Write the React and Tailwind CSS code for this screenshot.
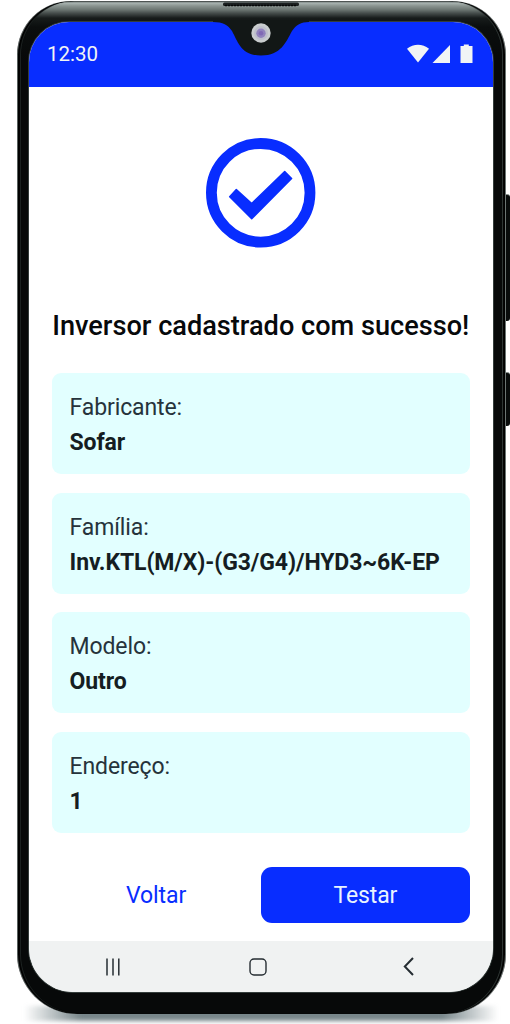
import React from 'react';

const fields = [
    { label: 'Fabricante:', value: 'Sofar' },
    { label: 'Família:', value: 'Inv.KTL(M/X)-(G3/G4)/HYD3~6K-EP' },
    { label: 'Modelo:', value: 'Outro' },
    { label: 'Endereço:', value: '1' },
];

const StatusBar = () => (
    <header className="flex h-[64.500px] shrink-0 items-center justify-between bg-[#082dff] pl-[18px] pr-[19px] text-[#f1f4f5]">
        <span className="text-[20.5px] leading-6">12:30</span>
        <svg width="68" height="20" viewBox="0 0 68 20" fill="currentColor">
            <path d="M1 4.8C7.5-.5 16.500-.5 23 4.800L12 18.500Z" />
            <path d="M44 1V19H26.500Z" />
            <path d="M54.500 2H57.800V.500H62.800V2H66.500V19H54.500Z" />
        </svg>
    </header>
);

// Front camera and the drop shaped cut-out around it
const Notch = () => (
    <svg className="absolute left-[193px] top-0" width="104" height="56" viewBox="210 1 104 56">
        <path d="M213 20H309V22C301 22 296 25 292 31C286 42 281 55.500 261 55.500C241 55.500 238 42 232 31C228 25 223 22 213 22Z" fill="#121716" />
        <rect x="223" y="2.500" width="76" height="3.500" rx="1.500" fill="#1b2020" />
        <path d="M225 5.500H297" stroke="#050707" strokeWidth="1.500" strokeDasharray="2 1" />
        <circle cx="261" cy="33" r="9.700" fill="#c9cdce" />
        <circle cx="261" cy="33" r="7" fill="#bdbfcb" />
        <circle cx="261" cy="33.300" r="4.700" fill="#9183bd" />
        <circle cx="261" cy="33.300" r="2.300" fill="#8069b5" />
    </svg>
);

const SuccessIcon = () => (
    <svg className="mx-auto shrink-0" width="110" height="110" viewBox="206 138 110 110">
        <circle cx="260.700" cy="192.800" r="49.300" fill="none" stroke="#082dff" strokeWidth="10.800" />
        <path
            d="M229.700 196.700L236.300 189.500L251.700 203.500L284.700 171.500L291.600 178.500L251.700 218.700Z"
            fill="#082dff"
            stroke="#082dff"
            strokeWidth="1.500"
            strokeLinejoin="round"
        />
    </svg>
);

const NavBar = () => (
    <nav className="mt-auto flex h-[51px] shrink-0 items-center bg-[#f0f2f2] pl-[77px] text-[#252d32]">
        <svg width="14" height="18" viewBox="0 0 14 18" stroke="currentColor" strokeWidth="1.500">
            <path d="M1 .500V17.500M7 .500V17.500M12.800 .500V17.500" />
        </svg>
        <svg className="ml-[129px]" width="18" height="18" viewBox="0 0 18 18" fill="none" stroke="currentColor" strokeWidth="1.400">
            <rect x="1" y="1" width="16" height="16" rx="4" />
        </svg>
        <svg className="ml-[136px]" width="11" height="19" viewBox="0 0 11 19" fill="none" stroke="currentColor" strokeWidth="2">
            <path d="M10 1L1.800 9.500L10 18" />
        </svg>
    </nav>
);

const App = () => {
    return (
        <div className="relative h-[1024px] w-[510px] overflow-hidden bg-white font-['Roboto',sans-serif]">
            {/* Shadow under the phone */}
            <div className="absolute left-[24px] top-[1006px] h-[15px] w-[474px] bg-[linear-gradient(to_right,transparent,#77868a_12%,#77868a_88%,transparent)] blur-[2px]" />

            {/* Side buttons */}
            <div className="absolute left-[503px] top-[194px] h-[127px] w-[7px] rounded-r-[3px] border-t border-[#87908e] bg-[#090c0c]" />
            <div className="absolute left-[503px] top-[372px] h-[54px] w-[7px] rounded-r-[3px] border-t border-[#87908e] bg-[#090c0c]" />

            <div className="relative ml-[16.500px] mt-px flex h-[1013px] w-[489px] rounded-t-[54px] rounded-b-[60px] bg-[#070909] bg-[linear-gradient(to_bottom,#49514f_0px,#a9b4b1_2px,#89938f_5px,#69736f_9px,#474f4d_12px,#171c1b_17px,#0b0e0e_26px,transparent_60px)] px-[12.500px] pb-[22px] pt-[21px] shadow-[inset_1px_0_0_#59615f,inset_-1px_0_0_#6c7573,inset_3px_0_1px_#000,inset_4px_0_0_#1f2524,inset_-3px_0_1px_#000,inset_-4px_0_0_#333b39]">
                <main className="flex w-full flex-col overflow-hidden rounded-t-[40px] rounded-b-[44px] bg-white shadow-[0_0_0_1px_#343d3b]">
                    <StatusBar />

                    <div className="flex flex-col pl-[22.500px] pr-[23px] pt-[51.500px]">
                        <SuccessIcon />
                        <h1 className="mt-[61px] flex justify-center whitespace-nowrap text-[27.150px] font-medium leading-[34px] text-[#07090b]">
                            Inversor cadastrado com sucesso!
                        </h1>

                        <div className="mt-[30px] flex flex-col gap-[18.700px]">
                            {fields.map(field => (
                                <div key={field.label} className="h-[101px] rounded-[9px] bg-[#e2ffff] px-[18px] pt-[17px] text-[23px] leading-[35px] tracking-[-0.1px]">
                                    <p className="text-[#26333b]">{field.label}</p>
                                    <p className="whitespace-nowrap font-bold text-[#151d22]">{field.value}</p>
                                </div>
                            ))}
                        </div>

                        <div className="mt-[34px] grid h-14 grid-cols-2 text-[23px] tracking-[-0.1px]">
                            <button className="pt-[3px] text-[#082dff]">Voltar</button>
                            <button className="rounded-[11px] bg-[#082dff] pt-[3px] text-[#e9f3ff]">Testar</button>
                        </div>
                    </div>

                    <NavBar />
                </main>

                <Notch />
            </div>
        </div>
    );
};

export default App;
